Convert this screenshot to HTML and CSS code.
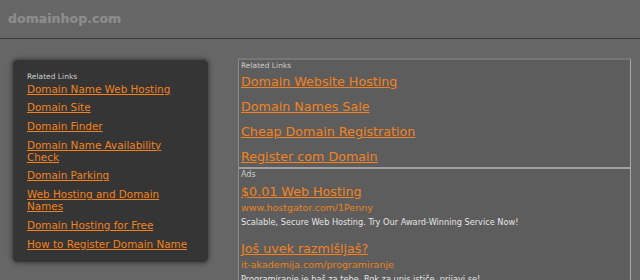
FILE: index.html
```html
<!DOCTYPE html>
<html>
<head>
  <title>domainhop.com</title>
  <link rel="stylesheet" href="styles.css">
</head>
<body>
  <div class="header">
    <span class="logo">domainhop.com</span>
  </div>
  <div class="main">
    <div class="sidebar">
      <div class="label">Related Links</div>
      <a href="#">Domain Name Web Hosting</a>
      <a href="#">Domain Site</a>
      <a href="#">Domain Finder</a>
      <a href="#">Domain Name Availability Check</a>
      <a href="#">Domain Parking</a>
      <a href="#">Web Hosting and Domain Names</a>
      <a href="#">Domain Hosting for Free</a>
      <a href="#">How to Register Domain Name</a>
    </div>
    <div class="content">
      <div class="block related">
        <div class="label">Related Links</div>
        <a href="#">Domain Website Hosting</a>
        <a href="#">Domain Names Sale</a>
        <a href="#">Cheap Domain Registration</a>
        <a href="#">Register com Domain</a>
      </div>
      <div class="block ads">
        <div class="label">Ads</div>
        <div class="ad">
          <a class="ad-title" href="#">$0.01 Web Hosting</a>
          <div class="ad-url">www.hostgator.com/1Penny</div>
          <div class="ad-text">Scalable, Secure Web Hosting. Try Our Award-Winning Service Now!</div>
        </div>
        <div class="ad">
          <a class="ad-title" href="#">Još uvek razmišljaš?</a>
          <div class="ad-url">it-akademija.com/programiranje</div>
          <div class="ad-text">Programiranje je baš za tebe. Rok za upis ističe, prijavi se!</div>
        </div>
      </div>
    </div>
  </div>
</body>
</html>
```

FILE: styles.css
```css
body {
  margin: 0;
  padding: 0;
  background-color: #666666;
  font-family: "DejaVu Sans", Verdana, sans-serif;
  overflow: hidden;
}

a {
  color: #f4821c;
}

.header {
  height: 38px;
  border-bottom: 1px solid #3a3a3a;
  display: flex;
  align-items: center;
  padding-left: 8px;
}

.logo {
  font-size: 12.6px;
  font-weight: bold;
  color: #8c8c8c;
  margin-top: -2px;
  text-shadow: 0 0 1px rgba(140, 140, 140, 0.6);
}

.main {
  display: flex;
  align-items: flex-start;
  padding-top: 19px;
}

.label {
  font-size: 7.5px;
  line-height: 10px;
  color: #cccccc;
}

.sidebar {
  box-sizing: border-box;
  width: 197px;
  margin-left: 12px;
  margin-top: 1px;
  padding: 12px 14px 12px 14px;
  background-color: #353535;
  border: 1px solid #4c4c4c;
  border-radius: 6px;
  box-shadow: 0 0 5px rgba(0, 0, 0, 0.45);
  display: flex;
  flex-direction: column;
  gap: 6.7px;
}

.sidebar .label {
  margin-bottom: -6px;
}

.sidebar a {
  font-size: 10.4px;
  line-height: 12px;
}

.content {
  box-sizing: border-box;
  width: 393px;
  margin-left: 29px;
  background-color: #5d5d5d;
  border-top: 2px solid #767676;
  border-left: 1px solid #8a8a8a;
  border-right: 1px solid #a8a8a8;
}

.block {
  padding: 1px 0 0 2px;
}

.related {
  display: flex;
  flex-direction: column;
  align-items: flex-start;
  gap: 10px;
  padding-bottom: 3px;
  border-bottom: 2px solid #a0a0a0;
}

.related .label {
  margin-bottom: -7px;
}

.related a {
  font-size: 12.7px;
  line-height: 15px;
}

.ads {
  display: flex;
  flex-direction: column;
  gap: 13px;
}

.ads .label {
  font-size: 8px;
  margin-bottom: -9px;
}

.ad {
  display: flex;
  flex-direction: column;
  align-items: flex-start;
}

.ad-title {
  font-size: 12.7px;
  line-height: 16px;
}

.ad-url {
  font-size: 9.5px;
  line-height: 16px;
  color: #e8821c;
}

.ad-text {
  font-size: 8.2px;
  line-height: 12px;
  color: #e4e4e4;
}
```
